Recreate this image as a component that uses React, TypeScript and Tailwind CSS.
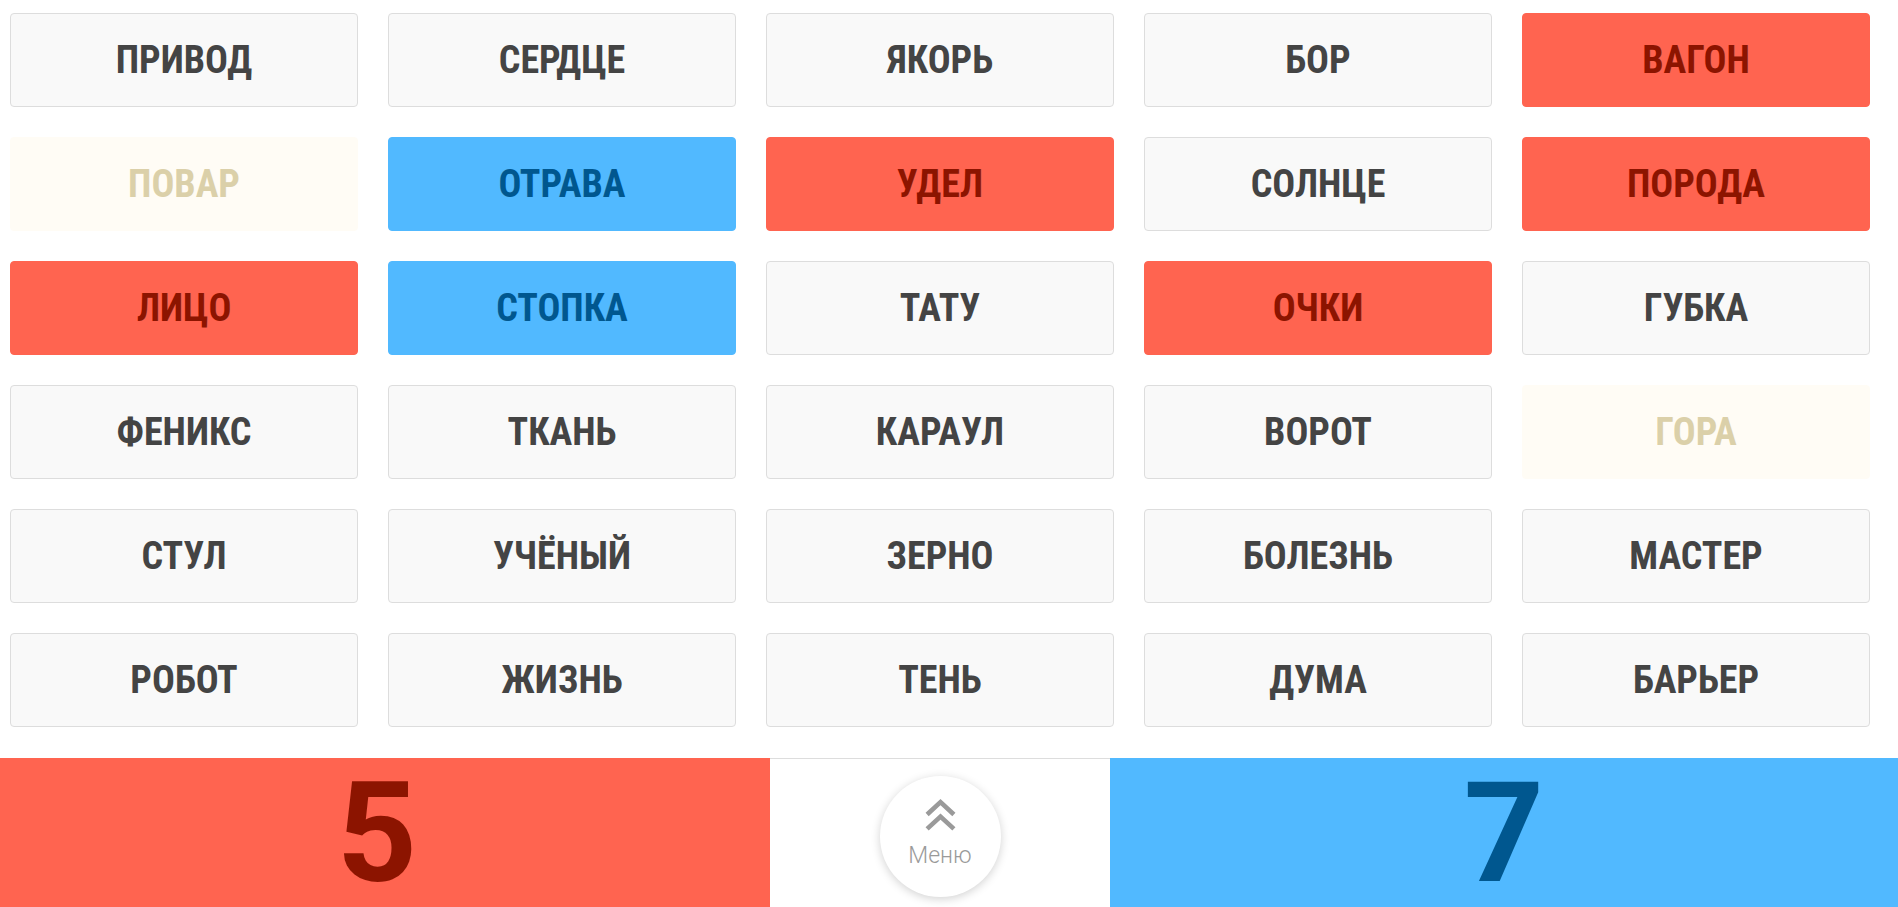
type Kind = 'neutral' | 'red' | 'blue' | 'beige';

const words: [string, Kind][] = [
  ['ПРИВОД', 'neutral'], ['СЕРДЦЕ', 'neutral'], ['ЯКОРЬ', 'neutral'], ['БОР', 'neutral'], ['ВАГОН', 'red'],
  ['ПОВАР', 'beige'], ['ОТРАВА', 'blue'], ['УДЕЛ', 'red'], ['СОЛНЦЕ', 'neutral'], ['ПОРОДА', 'red'],
  ['ЛИЦО', 'red'], ['СТОПКА', 'blue'], ['ТАТУ', 'neutral'], ['ОЧКИ', 'red'], ['ГУБКА', 'neutral'],
  ['ФЕНИКС', 'neutral'], ['ТКАНЬ', 'neutral'], ['КАРАУЛ', 'neutral'], ['ВОРОТ', 'neutral'], ['ГОРА', 'beige'],
  ['СТУЛ', 'neutral'], ['УЧЁНЫЙ', 'neutral'], ['ЗЕРНО', 'neutral'], ['БОЛЕЗНЬ', 'neutral'], ['МАСТЕР', 'neutral'],
  ['РОБОТ', 'neutral'], ['ЖИЗНЬ', 'neutral'], ['ТЕНЬ', 'neutral'], ['ДУМА', 'neutral'], ['БАРЬЕР', 'neutral'],
];

const cardStyles: Record<Kind, string> = {
  neutral: 'bg-[#f9f9f9] border-[#dddddd] text-[#444444]',
  red: 'bg-[#ff6450] border-[#ff6450] text-[#8c1400]',
  blue: 'bg-[#51b9ff] border-[#51b9ff] text-[#00578f]',
  beige: 'bg-[#fffcf5] border-[#fffcf5] text-[#dbd0a9]',
};

function WordCard({ word, kind }: { word: string; kind: Kind }) {
  return (
    <div
      className={`h-[94px] rounded-[4px] border flex items-center justify-center text-[38px] font-bold ${cardStyles[kind]}`}
    >
      {word}
    </div>
  );
}

export default function App() {
  return (
    <div className="w-[1898px] bg-white font-['Roboto_Condensed',Roboto,sans-serif]">
      <div className="grid grid-cols-[repeat(5,348px)] gap-x-[30px] gap-y-[30px] pl-[10px] pt-[13px]">
        {words.map(([w, k]) => (
          <WordCard key={w} word={w} kind={k} />
        ))}
      </div>

      {/* Score bar */}
      <div className="mt-[31px] flex h-[149px]">
        <div className="w-[770px] bg-[#ff6450] flex items-center justify-center pr-[16px] text-[140px] font-bold leading-[120px] text-[#8c1400] font-['Roboto',sans-serif]">
          5
        </div>
        <div className="w-[340px] border-t border-[#dddddd] bg-white flex justify-center pt-[17px]">
          <button className="w-[121px] h-[121px] rounded-full bg-white shadow-[0_2px_10px_rgba(0,0,0,0.18)] flex flex-col items-center pt-[22px]">
            <svg className="w-[35px] h-[35px] text-[#9a9a9a]" viewBox="0 0 34 34" fill="none" stroke="currentColor" strokeWidth="4.5">
              <path d="M4 16L17 4L30 16" />
              <path d="M4 30L17 18L30 30" />
            </svg>
            <span className="mt-[11px] text-[23px] font-light leading-none text-[#9a9a9a] font-['Roboto',sans-serif]">Меню</span>
          </button>
        </div>
        <div className="flex-1 bg-[#51b9ff] flex items-center justify-center text-[140px] font-bold leading-[120px] text-[#00578f] font-['Roboto',sans-serif]">
          7
        </div>
      </div>
    </div>
  );
}
